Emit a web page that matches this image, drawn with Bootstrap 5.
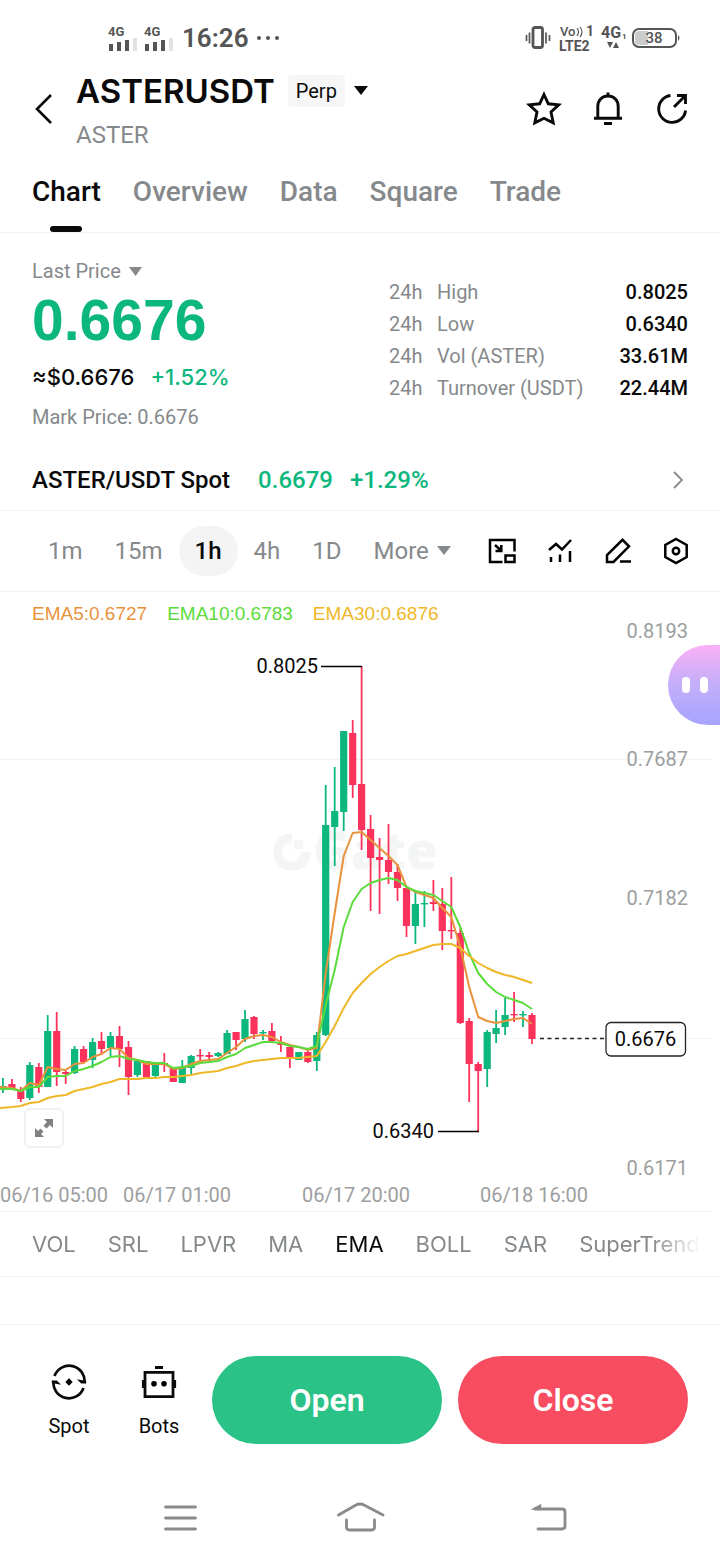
<!DOCTYPE html>
<html lang="en">
<head>
<meta charset="utf-8">
<meta name="viewport" content="width=device-width, initial-scale=1">
<title>ASTERUSDT Perp</title>
<link href="https://cdn.jsdelivr.net/npm/bootstrap@5.3.0/dist/css/bootstrap.min.css" rel="stylesheet">
<style>
  :root { --ink: #0a0a0a; --mute: #86898b; --up: #0cb77e; --down: #fb335c; --rule: #f2f3f3; }
  body { font-family: Roboto, "Noto Sans", sans-serif; color: var(--ink); background: #fff; font-size: 20px; line-height: 32px; }
  button, a { color: inherit; text-decoration: none; }
  .plain { background: none; border: 0; padding: 0; line-height: inherit; }
  svg { display: block; flex: none; }
  .stroke { fill: none; stroke: currentColor; }
  .grot { font-family: "Liberation Sans", Arial, sans-serif; }
  .mute { color: var(--mute); }
  .up { color: var(--up); }
  .rule-b { border-bottom: 1px solid var(--rule); }
  .side { padding-left: 32px; padding-right: 32px; }

  .status { height: 64px; padding: 12px 40px 0 108px; color: #555; }
  .clock { font-size: 26px; font-weight: 600; line-height: 28px; }

  .head { height: 92px; padding-right: 30px; padding-bottom: 2px; }
  .pair { font-family: Inter, sans-serif; font-size: 33px; font-weight: 600; line-height: 52px; }
  .pairline { gap: 13px; }
  .kind { font-size: 20px; background: #f6f6f6; border-radius: 4px; padding: 0 8px; }
  .coin { font-size: 24px; line-height: 36px; }
  .head-tools { gap: 28px; }

  .views { height: 77px; font-size: 28px; font-weight: 500; gap: 32px; }
  .views a { position: relative; display: flex; align-items: center; height: 76px; padding-bottom: 4px; color: var(--mute); }
  .views a.active { color: var(--ink); }
  .views a.active::after { content: ""; position: absolute; left: 50%; bottom: 0; width: 32px; height: 6px; margin-left: -16px; border-radius: 3px; background: var(--ink); }

  .quote { padding-top: 22px; padding-bottom: 16px; }
  .last { font-size: 57px; font-weight: 700; line-height: 66px; }
  .fiat { font-family: Inter, sans-serif; font-size: 22px; font-weight: 500; line-height: 48px; gap: 16px; }
  .stats { padding-top: 21px; }
  .stats th { font-weight: 400; color: var(--mute); padding: 0 11px 0 0; }
  .stats th:first-child { padding-right: 14px; width: 48px; }
  .stats td { font-weight: 500; padding: 0; text-align: right; }
  .stats table { width: 299px; }

  .spotline { height: 62px; font-size: 24px; font-weight: 500; padding-right: 36px; }
  .spotline .figures { gap: 17px; margin-left: 28px; }
  .ranges { height: 81px; font-size: 24px; padding-right: 30px; }
  .ranges .plain { height: 50px; padding: 0 16px; border-radius: 25px; color: var(--mute); }
  .ranges .plain.active { background: #f4f4f4; color: var(--ink); font-weight: 500; }
  .tools { gap: 30px; }
  .ranges .tools .plain { padding: 0; color: #000; }

  .chart { position: relative; }
  .chart > svg { width: 100%; height: auto; }
  .legend-row { position: absolute; left: 32px; top: 6px; gap: 20px; font-size: 19px; }
  .axis { fill: #9c9ea0; }
  .expand { position: absolute; left: 24px; bottom: 64px; width: 40px; height: 40px; border: 2px solid #f0f0f0; border-radius: 6px; background: #fff; color: #808080; }
  .helper { position: absolute; right: 0; top: 53px; width: 52px; height: 80px; border-radius: 40px 0 0 40px; background: linear-gradient(#fab0f6, #c3aefa 50%, #a6a4ff); padding-left: 14px; gap: 10px; }
  .helper i { width: 8px; height: 16px; border-radius: 4px; background: #fff; }

  .studies { height: 64px; margin-right: 20px; padding-left: 32px; gap: 32px; font-family: Inter, sans-serif; font-size: 22px; overflow: hidden; -webkit-mask-image: linear-gradient(to left, transparent, #000 48px); mask-image: linear-gradient(to left, transparent, #000 48px); }
  .studies .plain { color: var(--mute); }
  .studies .plain.active { color: var(--ink); }
  .spacer { height: 49px; border-top: 1px solid var(--rule); }

  .trade { padding: 31px 32px 32px 24px; }
  .trade .plain { width: 90px; padding-top: 5px; gap: 10px; }
  .trade .btn { height: 88px; border-radius: 44px; font-size: 32px; font-weight: 600; color: #fff; border: 0; }
  .buy { background: #2bc288; }
  .sell { background: #f84c60; }
  .keys { height: 84px; color: #8a8a8a; padding: 0 150px; }
</style>
</head>
<body>
<div class="status d-flex align-items-center justify-content-between">
  <div class="d-flex align-items-center gap-2">
    <svg width="66" height="28" viewBox="0 0 66 28" fill="#555" font-family="Roboto, sans-serif" font-size="13" font-weight="700">
      <text x="0" y="12">4G</text><text x="36" y="12">4G</text>
      <path d="M1 20h4v7H1zM9 18h4v9H9zM17 16h4v11h-4zM37 20h4v7h-4zM45 18h4v9h-4zM53 16h4v11h-4z"/>
      <path fill="#e2e2e2" d="M25 14h4v13h-4zM61 14h4v13h-4z"/>
    </svg>
    <span class="clock">16:26</span>
    <svg width="24" height="8" viewBox="0 0 24 8" fill="#555"><circle cx="2" cy="4" r="2"/><circle cx="11" cy="4" r="2"/><circle cx="20" cy="4" r="2"/></svg>
  </div>
  <svg width="156" height="30" viewBox="0 0 156 30" fill="#555" font-family="Roboto, sans-serif" font-weight="700">
    <rect x="9" y="4.500" width="9.500" height="20" rx="2" fill="none" stroke="#555" stroke-width="2.800"/>
    <path d="M2.500 12v6M5.500 9.500v11M22 9.500v11M25.500 12v6" stroke="#555" stroke-width="1.700"/>
    <text x="36" y="13" font-size="13" font-weight="500">Vo</text>
    <path class="stroke" d="M53 5q3 4 0 8M56 4q4 5 0 10" stroke-width="1.200"/>
    <text x="62" y="13" font-size="14">1</text>
    <text x="35" y="28" font-size="14">LTE2</text>
    <text x="77" y="15" font-size="16">4G</text><text x="98" y="16" font-size="8">1</text>
    <path d="M83 19h6l-3 6zM89 25h6l-3-6z"/>
    <rect x="109" y="6" width="43" height="18" rx="6" fill="#fff" stroke="#555" stroke-width="2"/>
    <path d="M115 8h9v14h-9q-4 0-4-4v-6q0-4 4-4z" fill="#ccc"/>
    <text x="121.500" y="20" font-size="15" font-weight="500">38</text>
    <path d="M154 12q3 3 0 6z"/>
  </svg>
</div>

<header class="head side d-flex align-items-center">
  <button class="plain" aria-label="Back"><svg width="24" height="32" viewBox="0 0 24 32" class="stroke" stroke-width="2.600"><path d="M19 2 5 16l14 14"/></svg></button>
  <div class="ms-3 ps-1 flex-grow-1">
    <div class="pairline d-flex align-items-center">
      <span class="pair">ASTERUSDT</span>
      <button class="plain d-flex align-items-center"><span class="kind">Perp</span>
        <svg class="ms-2" width="16" height="10" viewBox="0 0 16 10" fill="currentColor"><path d="M1 0h14L8 9z"/></svg></button>
    </div>
    <div class="coin mute">ASTER</div>
  </div>
  <div class="head-tools d-flex">
    <button class="plain" aria-label="Favourite"><svg width="36" height="36" viewBox="0 0 36 36" class="stroke" stroke-width="2.900"><path d="m18 3.500 4.300 9.300 10.500 1-7.800 7.200 2.200 10.800L18 27.300l-9.200 4.500L11 21l-7.800-7.200 10.500-1z"/></svg></button>
    <button class="plain" aria-label="Alerts"><svg width="36" height="36" viewBox="0 0 36 36" class="stroke" stroke-width="2.900"><path d="M7.800 27V15.500C7.800 9 12.500 5 18 5s10.200 4 10.200 10.500V27M4 27.300h28M18 1.500V5M14 32.500h8"/></svg></button>
    <button class="plain" aria-label="Share"><svg width="36" height="36" viewBox="0 0 36 36" class="stroke" stroke-width="2.900"><path d="M16.500 4.500A13.500 13.500 0 1 0 31.600 19.500M20 16 30.500 5.500M23 4.500h8.500V13"/></svg></button>
  </div>
</header>

<nav class="views side d-flex rule-b">
  <a href="#" class="active">Chart</a><a href="#">Overview</a><a href="#">Data</a><a href="#">Square</a><a href="#">Trade</a>
</nav>

<section class="quote side d-flex justify-content-between">
  <div>
    <button class="plain mute d-flex align-items-center gap-2">Last Price <svg width="14" height="9" viewBox="0 0 14 9" fill="currentColor"><path d="M0 0h13L6.500 9z"/></svg></button>
    <div class="last up grot">0.6676</div>
    <div class="fiat d-flex"><span>≈$0.6676</span><span class="up">+1.52%</span></div>
    <div class="mute">Mark Price: 0.6676</div>
  </div>
  <div class="stats">
    <table>
      <tbody>
      <tr><th>24h</th><th>High</th><td>0.8025</td></tr>
      <tr><th>24h</th><th>Low</th><td>0.6340</td></tr>
      <tr><th>24h</th><th>Vol (ASTER)</th><td>33.61M</td></tr>
      <tr><th>24h</th><th>Turnover (USDT)</th><td>22.44M</td></tr>
      </tbody>
    </table>
  </div>
</section>

<a href="#" class="spotline side d-flex align-items-center rule-b">
  <span>ASTER/USDT Spot</span>
  <span class="figures up d-flex"><span>0.6679</span><span>+1.29%</span></span>
  <svg class="stroke mute ms-auto" width="12" height="20" viewBox="0 0 12 20" stroke-width="1.800"><path d="m2 2 8 8-8 8"/></svg>
</a>

<div class="ranges side d-flex align-items-center justify-content-between rule-b">
  <div class="d-flex">
    <button class="plain">1m</button><button class="plain">15m</button><button class="plain active">1h</button><button class="plain">4h</button><button class="plain">1D</button>
    <button class="plain d-flex align-items-center gap-2">More <svg width="14" height="10" viewBox="0 0 14 10" fill="currentColor"><path d="M0 0h14L7 9z"/></svg></button>
  </div>
  <div class="tools d-flex">
    <button class="plain" aria-label="Small window"><svg width="28" height="28" viewBox="0 0 28 28" class="stroke" stroke-width="2.500"><path d="M14.500 25H2V3h24.500v11.500M17.500 18.500h9V25h-9zM7 8l6 5.500M13.300 8v6H7.500"/></svg></button>
    <button class="plain" aria-label="Indicators"><svg width="28" height="28" viewBox="0 0 28 28" class="stroke" stroke-width="2.500"><path d="m3 13 7-6 6 5.500L25 3M5 20v5M14 17.500V25M24 14v11"/></svg></button>
    <button class="plain" aria-label="Draw"><svg width="28" height="28" viewBox="0 0 28 28" class="stroke" stroke-width="2.500"><path d="M3 25v-7L18.500 2.800l6.500 6.500L9.500 25zM16 24.600h11"/></svg></button>
    <button class="plain" aria-label="Settings"><svg width="28" height="28" viewBox="0 0 28 28" class="stroke" stroke-width="2.500"><path d="m14 2 10.700 6v12L14 26 3.300 20V8z"/><circle cx="14" cy="14" r="3.200"/></svg></button>
  </div>
</div>

<section class="chart">
  <svg viewBox="0 592 720 620" font-family="Roboto, sans-serif" font-size="20">
    <g fill="#f4f5f5">
      <path d="M292 833a19 19 0 1 0 19 19h-10a9.500 9.500 0 1 1-9.500-9.500zM294 840h9v9h-9z"/>
      <text x="313" y="869" font-family="Open Sans, sans-serif" font-weight="800" font-size="51">Gate</text>
    </g>
    <path d="M0 759.500h712M0 1038.500h712M0 1211.500h712" stroke="#f2f3f3"/>
    <g id="candles"></g>
    <g id="averages" fill="none" stroke-width="2" stroke-linejoin="round"></g>
    <path d="M321 666.500h41M438 1131.500h41" stroke="#000" stroke-width="1.300"/>
    <path d="M540 1038.500h66" stroke="#222" stroke-dasharray="4 3.500" stroke-width="1.300"/>
    <rect x="606" y="1022.500" width="79.500" height="33.500" rx="5" fill="#fff" stroke="#222" stroke-width="1.300"/>
    <text x="645.500" y="1046" text-anchor="middle" fill="#0a0a0a">0.6676</text>
    <text x="318" y="673" text-anchor="end" fill="#0a0a0a">0.8025</text>
    <text x="434" y="1138" text-anchor="end" fill="#0a0a0a">0.6340</text>
    <g class="axis" text-anchor="end">
      <text x="688" y="638">0.8193</text><text x="688" y="766">0.7687</text><text x="688" y="905">0.7182</text><text x="688" y="1175">0.6171</text>
    </g>
    <g class="axis">
      <text x="0" y="1202">06/16 05:00</text><text x="123" y="1202">06/17 01:00</text><text x="302" y="1202">06/17 20:00</text><text x="480" y="1202">06/18 16:00</text>
    </g>
  </svg>
  <div class="legend-row grot d-flex">
    <span style="color:#e8923c">EMA5:0.6727</span><span style="color:#5bdb3b">EMA10:0.6783</span><span style="color:#efb828">EMA30:0.6876</span>
  </div>
  <button class="expand p-0 d-flex align-items-center justify-content-center" aria-label="Full screen"><svg width="20" height="20" viewBox="0 0 20 20" fill="currentColor"><path d="M10 1h9v9l-3-3-3.500 3.500L9.500 7.500 13 4zM10 19H1v-9l3 3 2.500-2.500 3 3L7 16z"/></svg></button>
  <button class="helper plain d-flex align-items-center" aria-label="Assistant"><i></i><i></i></button>
</section>

<div class="studies d-flex align-items-center">
  <button class="plain">VOL</button><button class="plain">SRL</button><button class="plain">LPVR</button><button class="plain">MA</button><button class="plain active">EMA</button><button class="plain">BOLL</button><button class="plain">SAR</button><button class="plain">SuperTrend</button>
</div>
<div class="spacer rule-b"></div>

<footer>
  <div class="trade d-flex align-items-center">
    <button class="plain d-flex flex-column align-items-center"><svg width="36" height="36" viewBox="0 0 36 36" class="stroke" stroke-width="2.700"><path d="M3.500 12A15.500 15.500 0 0 1 33.500 19M32.500 24A15.500 15.500 0 0 1 2.500 17"/><path d="M34.500 18.800h-4l-2.500-2.500 6.500 1.200zM1.500 17.200h4L8 19.700l-6.500-1.200z" fill="#000" stroke-width="1.400"/><path d="m18 14.300 3.700 3.700-3.700 3.700-3.700-3.700z" fill="#000" stroke="none"/></svg>Spot</button>
    <button class="plain d-flex flex-column align-items-center"><svg width="36" height="36" viewBox="0 0 36 36" class="stroke" stroke-width="2.800"><path d="M4 8.300h28v24.400H4zM14 3.500h8M2.300 16v8M33.700 16v8"/><g fill="#000" stroke="none"><circle cx="13" cy="19.700" r="2.800"/><circle cx="23" cy="19.700" r="2.800"/></g></svg>Bots</button>
    <div class="d-flex flex-grow-1 gap-3 ms-2">
      <button class="btn buy flex-fill w-50">Open</button>
      <button class="btn sell flex-fill w-50">Close</button>
    </div>
  </div>
  <div class="keys d-flex align-items-center justify-content-between">
    <button class="plain" aria-label="Recent apps"><svg width="60" height="32" viewBox="0 0 60 32" class="stroke" stroke-width="2.800" stroke-linecap="round"><path d="M15.500 5h30M15.500 16h30M15.500 27h30"/></svg></button>
    <button class="plain" aria-label="Home"><svg width="60" height="32" viewBox="0 0 60 32" class="stroke" stroke-width="2.800" stroke-linecap="round"><path d="M8.500 13 26 3q4-2 8 0l19 10M16.500 18v7q0 3 3 3h22q3 0 3-3v-7"/></svg></button>
    <button class="plain" aria-label="Back"><svg width="60" height="32" viewBox="0 0 60 32" class="stroke" stroke-width="2.800" stroke-linecap="round"><path d="M28 27h24q3 0 3-3V10q0-3-3-3H25"/><path d="m23.500 7 7-4v4z" fill="currentColor" stroke-width="1.500"/></svg></button>
  </div>
</footer>

<script src="https://cdn.jsdelivr.net/npm/bootstrap@5.3.0/dist/js/bootstrap.bundle.min.js"></script>
<script>
  // Hourly candles: direction, high, body top, body bottom, low (chart units)
  const candles = [
    ['g',1078,1086,1090,1093],['r',1079,1084,1088,1090],['r',1087,1091,1099,1102],['g',1062,1065,1098,1100],['r',1063,1067,1087,1093],
    ['g',1015,1031,1087,1087],['r',1012,1031,1072,1086],['r',1069,1072,1074,1084],['g',1046,1049,1073,1074],['r',1046,1049,1062,1063],
    ['g',1038,1042,1060,1068],['r',1032,1041,1049,1055],['g',1032,1036,1048,1056],['r',1026,1036,1049,1067],['r',1041,1047,1077,1095],
    ['g',1061,1061,1075,1077],['r',1061,1061,1077,1077],['g',1064,1065,1076,1078],['r',1053,1063,1065,1072],['r',1068,1068,1082,1082],
    ['g',1060,1067,1083,1083],['g',1055,1056,1068,1074],['r',1049,1055,1056,1060],['r',1052,1055,1057,1060],['g',1052,1053,1056,1057],
    ['g',1030,1033,1054,1054],['r',1032,1032,1040,1050],['g',1010,1019,1039,1042],['r',1016,1017,1034,1039],['g',1030,1032,1033,1040],
    ['r',1023,1031,1041,1043],['r',1036,1043,1045,1052],['r',1045,1047,1057,1068],['g',1052,1052,1060,1060],['r',1049,1052,1062,1063],
    ['g',1032,1035,1061,1071],['g',785,825,1035,1036],['g',767,811,827,866],['g',731,731,812,831],['r',720,733,785,798],
    ['r',666,784,830,850],['r',815,829,858,911],['r',838,857,860,914],['r',824,860,872,884],['r',864,872,888,901],
    ['r',888,888,926,937],['g',891,904,926,944],['g',891,903,904,927],['r',880,902,904,911],['r',888,904,931,950],
    ['r',877,930,931,939],['r',927,933,1023,1024],['r',1018,1021,1064,1102],['r',1062,1064,1071,1131],['g',1030,1032,1069,1087],
    ['g',1010,1028,1034,1043],['g',998,1015,1027,1035],['r',992,1014,1015,1022],['g',1011,1014,1015,1027],['r',1013,1015,1039,1044]
  ];
  const averages = {
    '#e8923c': [1087,1088,1091,1083,1085,1067,1069,1070,1064,1063,1057,1054,1048,1049,1058,1060,1064,1064,1064,1069,1068,1064,1061,1060,1059,1053,1047,1039,1036,1035,1037,1042,1045,1047,1050,1048,973,913,856,833,832,840,848,856,865,887,892,895,898,908,917,947,987,1017,1021,1023,1021,1019,1018,1024],
    '#5bdb3b': [1089,1089,1091,1087,1087,1077,1076,1076,1071,1069,1066,1062,1057,1056,1059,1060,1062,1063,1063,1068,1067,1066,1063,1062,1061,1057,1054,1048,1045,1042,1042,1043,1046,1047,1049,1046,1005,970,927,902,889,883,880,878,880,887,891,893,895,901,907,927,953,973,984,992,997,1000,1003,1009],
    '#efb828': [1108,1107,1106,1103,1102,1098,1096,1095,1091,1089,1087,1084,1082,1079,1079,1079,1078,1078,1077,1077,1076,1075,1073,1072,1071,1068,1066,1063,1061,1060,1059,1058,1058,1058,1057,1056,1042,1026,1008,993,983,974,967,961,956,954,951,948,945,944,944,948,956,963,968,972,975,977,980,983]
  };
  const x = i => (2.9 + i * 8.968).toFixed(1);
  document.getElementById('candles').innerHTML = candles.map(([dir, high, top, bottom, low], i) => {
    const c = dir === 'g' ? '#0cb77e' : '#fb335c';
    return `<path d="M${x(i)} ${high}V${low}" stroke="${c}" stroke-width="1.8"/><path d="M${x(i)} ${top}V${Math.max(bottom, top + 1.4)}" stroke="${c}" stroke-width="7.2"/>`;
  }).join('');
  document.getElementById('averages').innerHTML = Object.entries(averages).map(([c, ys]) =>
    `<polyline stroke="${c}" points="${ys.map((y, i) => (i ? x(i) : 0) + ',' + y).join(' ')}"/>`).join('');
</script>
</body>
</html>
